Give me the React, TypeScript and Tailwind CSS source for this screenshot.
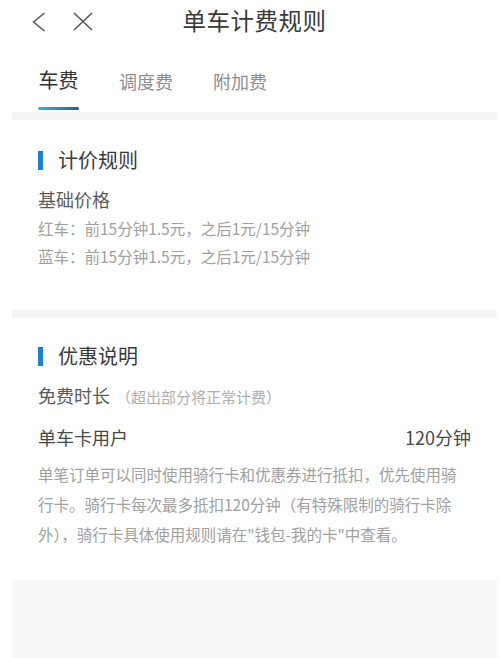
import React from "react";

const font = { fontFamily: '"Noto Sans CJK SC", "Noto Sans", sans-serif' };

const SectionTitle: React.FC<{ title: string }> = ({ title }) => (
  <div className="flex items-center h-[22px]">
    <span className="w-[5px] h-[19px] bg-[#1f7fd1] mr-[15px]" />
    <span className="text-[20px] leading-none text-[#3a3a3a]">{title}</span>
  </div>
);

export default function App() {
  return (
    <div className="w-[500px] h-[658px] bg-white overflow-hidden" style={font}>
      <div className="ml-3 mr-[3px] flex flex-col h-full">
        {/* header */}
        <div className="grid grid-cols-[1fr_auto_1fr] items-center h-[42px]">
          <div className="flex items-center gap-[27px] pl-[20px] pt-[1px]">
            <svg width="14" height="20" viewBox="0 0 14 20" fill="none">
              <path d="M12.5 1 L1.5 10 L12.5 19" stroke="#555" strokeWidth="1.5" />
            </svg>
            <svg width="20" height="19" viewBox="0 0 20 19" fill="none">
              <path d="M1 1 L19 18 M19 1 L1 18" stroke="#555" strokeWidth="1.5" />
            </svg>
          </div>
          <div className="text-[23.5px] text-[#3a3a3a] tracking-[0.5px]">单车计费规则</div>
          <div />
        </div>

        {/* tabs */}
        <div className="flex h-[70px] pl-[26px] gap-[40px]">
          <div className="flex flex-col items-center">
            <div className="text-[20px] text-[#333] mt-[25px] leading-[26px]">车费</div>
            <div className="mt-[14px] w-[41px] h-[3px] rounded-full bg-gradient-to-r from-[#3cb6c8] to-[#2b5f8a]" />
          </div>
          <div className="text-[18px] text-[#8e8e8e] mt-[26px] leading-[26px]">调度费</div>
          <div className="text-[18px] text-[#8e8e8e] mt-[26px] leading-[26px]">附加费</div>
        </div>

        <div className="h-[8px] bg-[#f5f5f5]" />

        {/* pricing rules */}
        <div className="h-[190px] pl-[26px] pt-[29px]">
          <SectionTitle title="计价规则" />
          <div className="mt-[17px] text-[18px] leading-[22px] text-[#5a5a5a]">基础价格</div>
          <div className="mt-[7px] text-[15.5px] leading-[22px] text-[#a0a0a0]">
            红车：前15分钟1.5元，之后1元/15分钟
          </div>
          <div className="mt-[6px] text-[15.5px] leading-[22px] text-[#a0a0a0]">
            蓝车：前15分钟1.5元，之后1元/15分钟
          </div>
        </div>

        <div className="h-[8px] bg-[#f5f5f5]" />

        {/* discounts */}
        <div className="h-[262px] pl-[26px] pr-[26px] pt-[27px]">
          <SectionTitle title="优惠说明" />
          <div className="mt-[16px] flex items-baseline leading-[24px]">
            <span className="text-[18px] text-[#5a5a5a]">免费时长</span>
            <span className="ml-[6px] text-[15px] text-[#adadad]">（超出部分将正常计费）</span>
          </div>
          <div className="mt-[16px] flex justify-between items-center leading-[24px] text-[18px] text-[#484848]">
            <span>单车卡用户</span>
            <span>120分钟</span>
          </div>
          <p className="mt-[10px] text-[15.5px] leading-[30px] text-[#a0a0a0] pr-[14px]">
            单笔订单可以同时使用骑行卡和优惠券进行抵扣，优先使用骑行卡。骑行卡每次最多抵扣120分钟（有特殊限制的骑行卡除外），骑行卡具体使用规则请在"钱包-我的卡"中查看。
          </p>
        </div>

        <div className="flex-1 bg-[#f7f7f7]" />
      </div>
    </div>
  );
}
